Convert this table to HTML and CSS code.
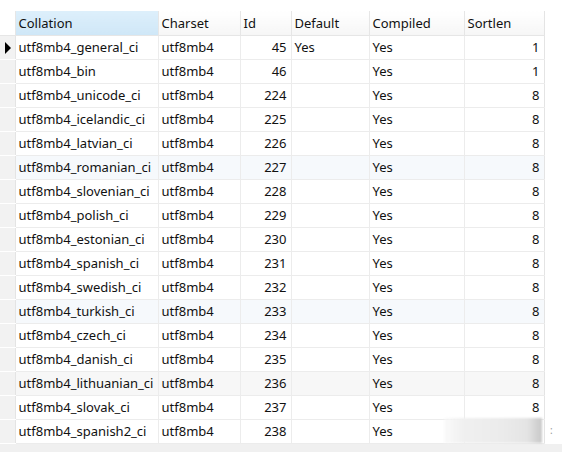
FILE: index.html
```html
<!DOCTYPE html>
<html>
<head>
<meta charset="utf-8">
<link rel="stylesheet" href="styles.css">
</head>
<body>
<div class="frame">
<table class="grid">
<colgroup>
<col class="c-gut"><col class="c-coll"><col class="c-cs"><col class="c-id"><col class="c-def"><col class="c-comp"><col class="c-sort">
</colgroup>
<thead>
<tr><th class="gut"></th><th class="sorted">Collation</th><th>Charset</th><th>Id</th><th>Default</th><th>Compiled</th><th>Sortlen</th></tr>
</thead>
<tbody>
<tr><td class="gut"><span class="arrow"></span></td><td>utf8mb4_general_ci</td><td>utf8mb4</td><td class="num">45</td><td>Yes</td><td>Yes</td><td class="num">1</td></tr>
<tr><td class="gut"></td><td>utf8mb4_bin</td><td>utf8mb4</td><td class="num">46</td><td></td><td>Yes</td><td class="num">1</td></tr>
<tr><td class="gut"></td><td>utf8mb4_unicode_ci</td><td>utf8mb4</td><td class="num">224</td><td></td><td>Yes</td><td class="num">8</td></tr>
<tr><td class="gut"></td><td>utf8mb4_icelandic_ci</td><td>utf8mb4</td><td class="num">225</td><td></td><td>Yes</td><td class="num">8</td></tr>
<tr><td class="gut"></td><td>utf8mb4_latvian_ci</td><td>utf8mb4</td><td class="num">226</td><td></td><td>Yes</td><td class="num">8</td></tr>
<tr class="tint"><td class="gut"></td><td>utf8mb4_romanian_ci</td><td>utf8mb4</td><td class="num">227</td><td></td><td>Yes</td><td class="num">8</td></tr>
<tr><td class="gut"></td><td>utf8mb4_slovenian_ci</td><td>utf8mb4</td><td class="num">228</td><td></td><td>Yes</td><td class="num">8</td></tr>
<tr><td class="gut"></td><td>utf8mb4_polish_ci</td><td>utf8mb4</td><td class="num">229</td><td></td><td>Yes</td><td class="num">8</td></tr>
<tr><td class="gut"></td><td>utf8mb4_estonian_ci</td><td>utf8mb4</td><td class="num">230</td><td></td><td>Yes</td><td class="num">8</td></tr>
<tr><td class="gut"></td><td>utf8mb4_spanish_ci</td><td>utf8mb4</td><td class="num">231</td><td></td><td>Yes</td><td class="num">8</td></tr>
<tr><td class="gut"></td><td>utf8mb4_swedish_ci</td><td>utf8mb4</td><td class="num">232</td><td></td><td>Yes</td><td class="num">8</td></tr>
<tr class="tint"><td class="gut"></td><td>utf8mb4_turkish_ci</td><td>utf8mb4</td><td class="num">233</td><td></td><td>Yes</td><td class="num">8</td></tr>
<tr><td class="gut"></td><td>utf8mb4_czech_ci</td><td>utf8mb4</td><td class="num">234</td><td></td><td>Yes</td><td class="num">8</td></tr>
<tr><td class="gut"></td><td>utf8mb4_danish_ci</td><td>utf8mb4</td><td class="num">235</td><td></td><td>Yes</td><td class="num">8</td></tr>
<tr class="gray"><td class="gut"></td><td>utf8mb4_lithuanian_ci</td><td>utf8mb4</td><td class="num">236</td><td></td><td>Yes</td><td class="num">8</td></tr>
<tr><td class="gut"></td><td>utf8mb4_slovak_ci</td><td>utf8mb4</td><td class="num">237</td><td></td><td>Yes</td><td class="num">8</td></tr>
<tr><td class="gut"></td><td>utf8mb4_spanish2_ci</td><td>utf8mb4</td><td class="num">238</td><td></td><td>Yes</td><td class="num">8</td></tr>
</tbody>
</table>
<div class="footer"></div>
<div class="smudge"></div>
<div class="dots">:</div>
</div>
</body>
</html>
```
FILE: styles.css
```css
html, body {
  margin: 0;
  padding: 0;
  background: #ffffff;
}
body {
  width: 562px;
  height: 452px;
  overflow: hidden;
  font-family: "Noto Sans", "Open Sans", sans-serif;
  font-size: 13px;
  color: #111111;
}
.frame {
  position: relative;
  padding-top: 11px;
  width: 562px;
  height: 441px;
}
.grid {
  border-collapse: collapse;
  table-layout: fixed;
  width: 544px;
}
.c-gut { width: 15px; }
.c-coll { width: 143px; }
.c-cs { width: 82px; }
.c-id { width: 51px; }
.c-def { width: 78px; }
.c-comp { width: 95px; }
.c-sort { width: 80px; }
.grid th, .grid td {
  height: 24px;
  padding: 0 3px;
  box-sizing: border-box;
  white-space: nowrap;
  overflow: hidden;
  line-height: 22px;
  text-align: left;
  font-weight: normal;
  border: 1px solid #ececec;
}
.grid th {
  background: linear-gradient(#ffffff, #f6f6f6);
  border-color: #e6e6e6;
  border-top: none;
}
.grid th.sorted {
  background: linear-gradient(#ddeffb, #cfe7f7);
}
.grid th.gut {
  background: #ffffff;
  border-left: none;
}
.grid td.gut {
  background: #f2f2f2;
  border-left: none;
  border-color: #ffffff #e4e4e4 #ffffff #f2f2f2;
  padding: 0;
  position: relative;
}
.grid td.num {
  text-align: right;
  padding-right: 4px;
}
.grid td:last-child, .grid th:last-child {
  border-right: 1px solid #e4e4e4;
}
.grid tr.tint td:not(.gut) { background: #f6f9fc; }
.grid tr.gray td:not(.gut) { background: #f7f7f7; }
.arrow {
  position: absolute;
  left: 5px;
  top: 6px;
  width: 0;
  height: 0;
  border-top: 6px solid transparent;
  border-bottom: 6px solid transparent;
  border-left: 6px solid #000000;
}
.footer {
  height: 9px;
  background: #f0f0f0;
  width: 562px;
}
.smudge {
  position: absolute;
  left: 444px;
  top: 418px;
  width: 98px;
  height: 25px;
  background: linear-gradient(90deg, rgba(248,248,248,0.7), #f0f0f0 20%, #ebebeb 60%, #e4e4e4 85%, #c8c8c8);
  filter: blur(1px);
}
.dots {
  position: absolute;
  left: 550px;
  top: 423px;
  font-size: 10px;
  color: #999;
}
```
